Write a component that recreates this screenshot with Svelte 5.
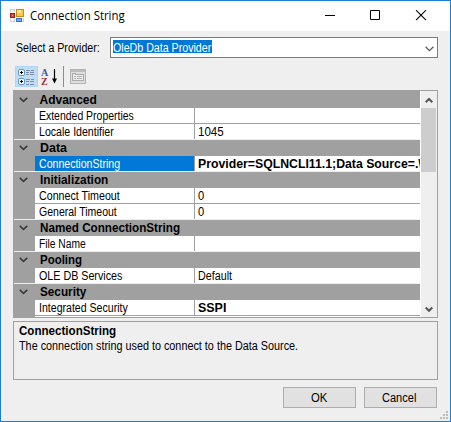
<script>
  const groups = [
    { name: 'Advanced', w: 57, rows: [
      { name: 'Extended Properties', w: 95, value: '' },
      { name: 'Locale Identifier', w: 75, value: '1045', vw: 26 }
    ] },
    { name: 'Data', w: 27, rows: [
      { name: 'ConnectionString', w: 81, value: 'Provider=SQLNCLI11.1;Data Source=.\\', vw: 224, bold: true, selected: true }
    ] },
    { name: 'Initialization', w: 68, rows: [
      { name: 'Connect Timeout', w: 81, value: '0', vw: 6.5 },
      { name: 'General Timeout', w: 78, value: '0', vw: 6.5 }
    ] },
    { name: 'Named ConnectionString', w: 140, rows: [{ name: 'File Name', w: 47, value: '' }] },
    { name: 'Pooling', w: 42, rows: [{ name: 'OLE DB Services', w: 83, value: 'Default', vw: 34 }] },
    { name: 'Security', w: 46, rows: [{ name: 'Integrated Security', w: 89, value: 'SSPI', vw: 28, bold: true }] }
  ];

  // Condenses a label horizontally to the given advance width.
  function fit(node, width) {
    if (!width) return;
    const natural = node.offsetWidth;
    if (natural) node.style.transform = `scaleX(${width / natural})`;
  }
</script>

<div class="window">
  <header class="titlebar">
    <svg class="app" width="14" height="14" viewBox="0 0 14 14" shape-rendering="crispEdges">
      <path d="M0 0h5v3H0zM0 10h5v3H0zM12 9h2v4h-2z" fill="#d0d0d0" />
      <path d="M1 1h3v2H1zM1 10h3v2H1zM12 9h1v3h-1z" fill="#f4f4f4" />
      <rect x="6.500" y=".5" width="7" height="7" fill="#fbc93f" stroke="#c58a20" />
      <rect x="7" y="1" width="4" height="3" fill="#ffe48a" />
      <rect x=".5" y="4.500" width="4" height="4" fill="#d9452c" stroke="#9e2217" />
      <rect x="2" y="6" width="1" height="1" fill="#ffb09a" />
      <rect x="6.500" y="9.500" width="5" height="3" fill="#6ea8f5" stroke="#3c72cc" />
    </svg>
    <span class="text title" use:fit={95}>Connection String</span>
    <svg class="controls" width="104" height="12" viewBox="0 0 104 12">
      <path d="M0 5.500h10" stroke="#000" />
      <path d="M45.500 .5h9v9h-9z" fill="none" stroke="#000" />
      <path d="M91 .2l10 10M101 .2l-10 10" stroke="#000" stroke-width="1.1" />
    </svg>
  </header>

  <div class="provider">
    <label for="provider"><span class="text" use:fit={84}>Select a Provider:</span></label>
    <div class="combo" id="provider">
      <div class="picked"><span class="text" use:fit={98.5}>OleDb Data Provider</span></div>
      <svg width="9" height="6" viewBox="0 0 9 6"><path d="M.6 .8l3.900 3.800L8.400 .8" fill="none" stroke="#555" stroke-width="1.2" /></svg>
    </div>
  </div>

  <div class="toolbar">
    <div class="tool active">
      <svg width="17" height="17" viewBox="0 0 17 17">
        <rect x=".5" y=".5" width="6" height="6" rx="1.500" fill="#fff" stroke="#5f97d4" />
        <rect x=".5" y="9.500" width="6" height="6" rx="1.500" fill="#fff" stroke="#5f97d4" />
        <path d="M2 3.500h3M3.500 2v3M2 12.500h3M3.500 11v3" stroke="#000" />
        <path d="M8 1.500h4M13 1.500h3M8 3.500h3M12 3.500h4M8 5.500h3M12 5.500h4M8 10.500h4M13 10.500h3M8 12.500h3M12 12.500h4M8 15.500h3M12 15.500h4" stroke="#7d8ba8" />
      </svg>
    </div>
    <div class="sort">
      <div class="az"><span class="a">A</span><span class="z">Z</span></div>
      <svg width="5" height="15" viewBox="0 0 5 15"><path d="M2.500 0v12" stroke="#000" stroke-width="1.200" /><path d="M0 9.500h5L2.500 14.500z" /></svg>
    </div>
    <div class="sep"></div>
    <svg class="pages" width="16" height="15" viewBox="0 0 16 15" shape-rendering="crispEdges">
      <rect x=".5" y=".5" width="15" height="14" fill="#dedede" stroke="#b4b4b4" />
      <path d="M1 1.500h14M1 2.500h14" stroke="#bcbcbc" />
      <path d="M2.500 11.500v-7h3v1h8v6z" fill="#ededed" stroke="#aaa" />
      <path d="M4 7.500h2M7 7.500h5M4 9.500h2M7 9.500h5" stroke="#b0b0b0" />
    </svg>
  </div>

  <div class="grid">
    <div class="rows">
      {#each groups as g}
        <div class="group">
          <div class="head">
            <svg width="9" height="6" viewBox="0 0 9 6"><path d="M.8 .8l3.700 3.600L8.200 .8" fill="none" stroke="#3c3c3c" stroke-width="1.700" /></svg>
            <span class="text bold" use:fit={g.w}>{g.name}</span>
          </div>
          {#each g.rows as r}
            <div class="row">
              <div class="name" class:selected={r.selected}><span class="text" use:fit={r.w}>{r.name}</span></div>
              <div class="value"><span class="text" class:bold={r.bold} use:fit={r.vw}>{r.value}</span></div>
            </div>
          {/each}
        </div>
      {/each}
    </div>
    <div class="scroll">
      <div class="btn"><svg width="8" height="7" viewBox="0 0 8 7"><path d="M.7 5.300L4 2l3.300 3.300" fill="none" stroke="#555" stroke-width="2" /></svg></div>
      <div class="thumb"></div>
      <div class="btn down"><svg width="8" height="7" viewBox="0 0 8 7"><path d="M.7 1.500L4 4.800l3.300-3.300" fill="none" stroke="#555" stroke-width="2" /></svg></div>
    </div>
  </div>

  <div class="help">
    <div><span class="text bold" use:fit={97.5}>ConnectionString</span></div>
    <div><span class="text" use:fit={279.5}>The connection string used to connect to the Data Source.</span></div>
  </div>

  <div class="actions">
    <div class="button"><span class="text ok" use:fit={16}>OK</span></div>
    <div class="button"><span class="text cancel" use:fit={34}>Cancel</span></div>
  </div>
  <svg class="grip" width="8" height="8" viewBox="0 0 8 8" shape-rendering="crispEdges">
    <path d="M6 0h2v2H6zM3 3h2v2H3zM6 3h2v2H6zM0 6h2v2H0zM3 6h2v2H3zM6 6h2v2H6z" fill="#bdbdbd" />
  </svg>
</div>

<style>
  .window {
    position: relative;
    box-sizing: border-box;
    width: 451px;
    height: 422px;
    border: 1px solid #1a7fd5;
    background: #efefef;
    font: 12px/16px "Liberation Sans", Arial, sans-serif;
    color: #000;
    display: flex;
    flex-direction: column;
    overflow: hidden;
  }
  svg { display: block; flex: none; }
  .text { display: inline-block; white-space: pre; transform-origin: 0 50%; }
  .bold { font-weight: bold; }
  .titlebar { height: 30px; flex: none; background: #fff; display: flex; align-items: flex-start; padding-left: 9px; box-sizing: border-box; }
  .app { margin-top: 8px; }
  .title { font: 12px/16px "Open Sans", "Noto Sans", sans-serif; margin: 7px 0 0 6px; }
  .controls { margin: 9px 21px 0 auto; }
  .provider { height: 21px; flex: none; margin: 6px 12px 0 15px; display: flex; }
  label { width: 94px; padding-top: 3px; box-sizing: border-box; flex: none; }
  .combo { flex: 1; box-sizing: border-box; border: 1px solid #7a7a7a; background: #fff; display: flex; justify-content: space-between; padding: 2px 3px 0 2px; }
  .picked { width: 99px; height: 13px; background: #0078d7; color: #fff; }
  .picked .text { display: block; width: max-content; line-height: 16px; }
  .combo svg { margin-top: 6px; }
  .toolbar { height: 32px; flex: none; padding: 8px 0 0 14px; box-sizing: border-box; display: flex; }
  .tool { width: 23px; height: 21px; padding: 2px 0 0 2px; box-sizing: border-box; background: #c0dcf3; border: 1px solid #b0d5f5; }
  .sort { display: flex; margin-left: 3px; width: 22px; }
  .sort svg { margin: 3px 0 0 3px; }
  .az { display: flex; flex-direction: column; font: bold 10px/9px "Liberation Serif", serif; padding-top: 2px; width: 8px; }
  .a { color: #3657a8; }
  .z { color: #9c3232; }
  .sep { width: 1px; height: 21px; background: #8c8c8c; }
  .pages { margin: 3px 0 0 6px; }
  .grid { height: 228px; flex: none; margin: 0 12px; box-sizing: border-box; border: 1px solid #a0a0a0; display: flex; overflow: hidden; background: #fff; }
  .rows { width: 406px; flex: none; background: linear-gradient(90deg, #a0a0a0 21px, #fff 21px); }
  .group { border-bottom: 1px solid #efefef; }
  .group:first-child { padding-top: 1px; background: linear-gradient(#a0a0a0 1px, transparent 1px); }
  .group:last-child { border-bottom-color: #a0a0a0; }
  .head { height: 16px; background: #a0a0a0; display: flex; padding-left: 5px; }
  .head svg { margin: 5px 11.500px 0 0; }
  .row { height: 15px; margin-left: 21px; display: flex; }
  .row + .row { border-top: 1px solid #a0a0a0; }
  .name { width: 159px; box-sizing: border-box; padding-left: 4px; height: 15px; }
  .value { flex: 1; border-left: 1px solid #a0a0a0; padding-left: 3px; overflow: hidden; height: 15px; min-width: 0; }
  .selected { background: #0078d7; color: #fff; }
  .scroll { flex: 1; margin-left: 1px; background: #efefef; display: flex; flex-direction: column; }
  .btn { height: 17px; display: flex; justify-content: center; align-items: center; padding-top: 1px; box-sizing: border-box; }
  .thumb { height: 64px; width: 15px; background: #cdcdcd; }
  .down { margin-top: auto; }
  .help { height: 59px; flex: none; box-sizing: border-box; margin: 3px 12px 0; border: 1px solid #a0a0a0; padding: 1px 5px; }
  .help div { height: 15px; }
  .actions { display: flex; justify-content: flex-end; gap: 8px; padding: 7px 13px 0 0; }
  .button { width: 73px; height: 21px; box-sizing: border-box; border: 1px solid #adadad; background: #e1e1e1; padding-top: 2px; }
  .ok { margin-left: 27px; }
  .cancel { margin-left: 17px; }
  .grip { position: absolute; right: 2px; bottom: 2px; }
</style>
